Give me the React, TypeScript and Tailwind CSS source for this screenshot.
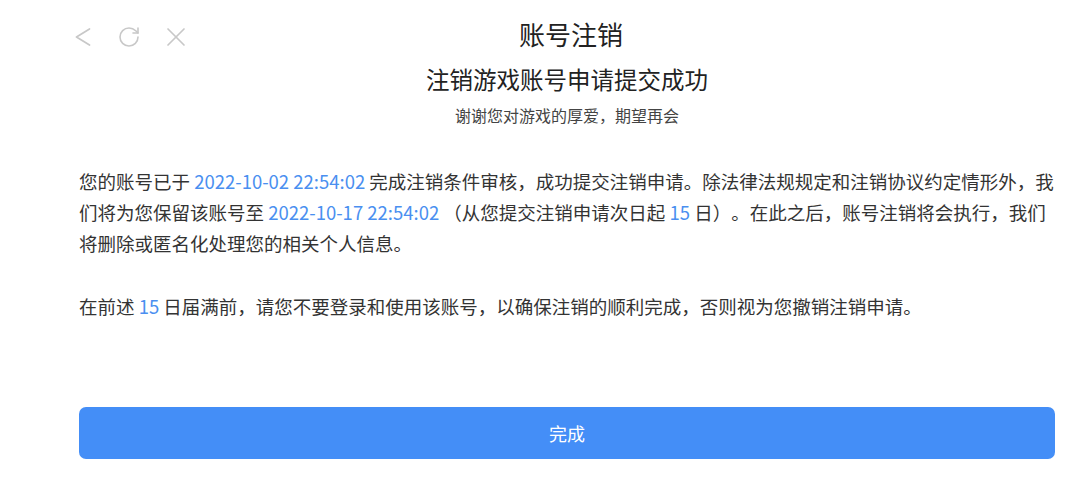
import { RotateCw } from "lucide-react";

const blue = "text-[#4a8ff0]";

export default function App() {
  return (
    <div
      className="bg-white w-[1080px] h-[499px] relative text-[#333] [text-spacing-trim:space-all]"
      style={{ fontFamily: '"Noto Sans CJK SC", "Noto Sans", sans-serif' }}
    >
      {/* top toolbar icons */}
      <div className="absolute left-[75px] top-[25px] flex items-center text-[#c8c8c8]">
        <svg width="16" height="18" viewBox="0 0 16 18" fill="none" stroke="currentColor" strokeWidth="1.7" strokeLinecap="round" strokeLinejoin="round">
          <polyline points="14.5,1 1.5,9 14.5,17" />
        </svg>
        <RotateCw size={24} strokeWidth={1.6} className="ml-[26px]" />
        <svg width="20" height="20" viewBox="0 0 20 20" fill="none" stroke="currentColor" strokeWidth="1.7" strokeLinecap="round" className="ml-[25px]">
          <line x1="2" y1="2" x2="18" y2="18" />
          <line x1="18" y1="2" x2="2" y2="18" />
        </svg>
      </div>

      <div className="pl-[79px] pr-[25px]">
        <div className="flex flex-col items-center pt-[16px]">
          <h1 className="text-[26px] leading-[36px] text-[#222] ml-[8px]">账号注销</h1>
          <h2 className="text-[23.5px] leading-[34px] text-[#222] mt-[10px]">注销游戏账号申请提交成功</h2>
          <p className="text-[16px] leading-[24px] text-[#444] mt-[7px]">谢谢您对游戏的厚爱，期望再会</p>
        </div>

        <div className="mt-[39px] text-[18.5px] leading-[31px]">
          <p>
            您的账号已于 <span className={blue}>2022-10-02 22:54:02</span> 完成注销条件审核，成功提交注销申请。除法律法规规定和注销协议约定情形外，我们将为您保留该账号至{" "}
            <span className={blue}>2022-10-17 22:54:02</span> （从您提交注销申请次日起 <span className={blue}>15</span> 日）。在此之后，账号注销将会执行，我们将删除或匿名化处理您的相关个人信息。
          </p>
          <p className="mt-[32px]">
            在前述 <span className={blue}>15</span> 日届满前，请您不要登录和使用该账号，以确保注销的顺利完成，否则视为您撤销注销申请。
          </p>
        </div>

        <div className="mt-[85px]">
          <button className="w-full h-[52px] rounded-[7px] bg-[#448ef7] text-white text-[18px]">完成</button>
        </div>
      </div>
    </div>
  );
}
